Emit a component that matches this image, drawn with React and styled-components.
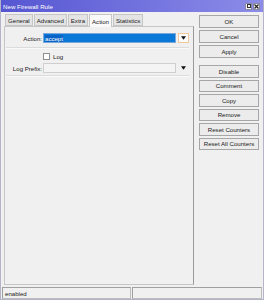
import React from "react";
import styled, { createGlobalStyle } from "styled-components";

const Global = createGlobalStyle`
  html, body { margin: 0; padding: 0; background: #f0f0f0; }
  body { font-family: "Liberation Sans", Arial, sans-serif; }
`;

const Window = styled.div`
  width: 264px;
  height: 300px;
  box-sizing: border-box;
  background: #f0f0f0;
  border: 1px solid #b4b4c8;
  border-top: none;
  display: flex;
  flex-direction: column;
  font-size: 6.1px;
  color: #1a1a1a;
  overflow: hidden;
`;

const TitleBar = styled.div`
  height: 12px;
  flex: none;
  background: linear-gradient(to right, #5656d2, #7676e0 60%, #8c8ce8);
  display: flex;
  align-items: center;
  padding: 0 3px 0 2px;
  color: #ffffff;
  font-size: 6.2px;
`;

const TitleText = styled.span`
  flex: 1;
`;

const WinButtons = styled.div`
  display: flex;
  gap: 1px;
`;

const WinButton = styled.div`
  width: 7px;
  height: 7px;
  box-sizing: border-box;
  background: #f4f4f4;
  border: 1px solid #8a8aa8;
  display: flex;
  align-items: center;
  justify-content: center;
`;

const Body = styled.div`
  flex: 1;
  display: flex;
  padding: 1px 4px 0 3px;
  gap: 5px;
`;

const LeftCol = styled.div`
  width: 190px;
  display: flex;
  flex-direction: column;
`;

const TabStrip = styled.div`
  height: 13px;
  display: flex;
  align-items: flex-end;
  gap: 1px;
  margin-left: 1px;
`;

const Tab = styled.div`
  height: ${(p) => (p.$active ? 13 : 12)}px;
  box-sizing: border-box;
  padding: 0 2px;
  display: flex;
  align-items: center;
  background: ${(p) => (p.$active ? "#f9f9f9" : "#e4e4e4")};
  border: 1px solid #c6c6c6;
  border-bottom: ${(p) => (p.$active ? "none" : "1px solid #c6c6c6")};
  margin-bottom: ${(p) => (p.$active ? "-1px" : "0")};
  position: relative;
  z-index: ${(p) => (p.$active ? 1 : 0)};
`;

const Panel = styled.div`
  flex: 1;
  box-sizing: border-box;
  border: 1px solid #c6c6c6;
  border-right: 1px solid #9a9a9a;
  background: #f0f0f0;
  padding: 6px 4px 0 0;
  display: flex;
  flex-direction: column;
`;

const Row = styled.div`
  display: flex;
  align-items: center;
  height: 10px;
`;

const Label = styled.div`
  width: 37px;
  text-align: right;
  padding-right: 1px;
  flex: none;
`;

const Field = styled.div`
  flex: 1;
  height: 10px;
  box-sizing: border-box;
  border: 1px solid ${(p) => (p.$selected ? "#7aa7d8" : "#cfcfcf")};
  background: ${(p) => (p.$selected ? "#0a78d7" : "#f4f4f4")};
  color: #ffffff;
  display: flex;
  align-items: center;
  padding-left: 1px;
`;

const Selected = styled.span`
  background: #0a64c8;
  color: #fff;
`;

const DropButton = styled.div`
  width: 11px;
  height: 10px;
  box-sizing: border-box;
  margin-left: 2px;
  flex: none;
  display: flex;
  align-items: center;
  justify-content: center;
  background: ${(p) => (p.$boxed ? "#fbfbfb" : "transparent")};
  border: 1px solid ${(p) => (p.$boxed ? "#f0c89a" : "transparent")};
`;

const Separator = styled.div`
  height: 0;
  border-top: 1px solid #dcdcdc;
  border-bottom: 1px solid #fafafa;
  margin: ${(p) => p.$m || "4px 0 4px 2px"};
`;

const CheckRow = styled.div`
  display: flex;
  align-items: center;
  height: 8px;
  padding-left: 38px;
  gap: 3px;
  margin-bottom: 3px;
`;

const CheckBox = styled.div`
  width: 7px;
  height: 7px;
  box-sizing: border-box;
  border: 1px solid #8e8e8e;
  background: #fff;
`;

const RightCol = styled.div`
  width: 60px;
  display: flex;
  flex-direction: column;
  padding-top: 2px;
`;

const Button = styled.div`
  height: 12.5px;
  box-sizing: border-box;
  border: 1px solid #a6a6a6;
  background: #ececec;
  display: flex;
  align-items: center;
  justify-content: center;
  margin-bottom: ${(p) => p.$gap ?? 2}px;
`;

const StatusBar = styled.div`
  height: 12px;
  flex: none;
  margin: 2px 1px 0 1px;
  display: flex;
  gap: 1px;
`;

const StatusCell = styled.div`
  flex: ${(p) => (p.$w ? `0 0 ${p.$w}px` : 1)};
  box-sizing: border-box;
  border: 1px solid #bdbdbd;
  border-top-color: #a0a0a0;
  border-left-color: #a0a0a0;
  display: flex;
  align-items: center;
  padding-left: 2px;
`;

const Arrow = ({ size = 5 }) => (
  <svg width={size} height={size - 1} viewBox="0 0 6 4">
    <path d="M0 0 L6 0 L3 4 Z" fill="#111" />
  </svg>
);

export default function App() {
  const buttons = [
    ["OK", 2.5],
    ["Cancel", 2.5],
    ["Apply", 7.5],
    ["Disable", 2],
    ["Comment", 2],
    ["Copy", 2],
    ["Remove", 2],
    ["Reset Counters", 2],
    ["Reset All Counters", 2],
  ];
  return (
    <>
      <Global />
      <Window>
        <TitleBar>
          <TitleText>New Firewall Rule</TitleText>
          <WinButtons>
            <WinButton>
              <svg width="4" height="4" viewBox="0 0 4 4">
                <rect x="0.5" y="0.5" width="3" height="3" fill="none" stroke="#333" strokeWidth="1" />
              </svg>
            </WinButton>
            <WinButton>
              <svg width="5" height="5" viewBox="0 0 5 5">
                <path d="M0.5 0.5 L4.5 4.5 M4.5 0.5 L0.5 4.5" stroke="#222" strokeWidth="1.2" />
              </svg>
            </WinButton>
          </WinButtons>
        </TitleBar>
        <Body>
          <LeftCol>
            <TabStrip>
              <Tab>General</Tab>
              <Tab>Advanced</Tab>
              <Tab>Extra</Tab>
              <Tab $active>Action</Tab>
              <Tab>Statistics</Tab>
            </TabStrip>
            <Panel>
              <Row>
                <Label>Action:</Label>
                <Field $selected>
                  <Selected>accept</Selected>
                </Field>
                <DropButton $boxed>
                  <Arrow />
                </DropButton>
              </Row>
              <Separator $m="4px 0 3px 1px" />
              <CheckRow>
                <CheckBox />
                <span>Log</span>
              </CheckRow>
              <Row>
                <Label>Log Prefix:</Label>
                <Field />
                <DropButton>
                  <Arrow />
                </DropButton>
              </Row>
              <Separator $m="2px 0 0 1px" />
            </Panel>
          </LeftCol>
          <RightCol>
            {buttons.map(([t, g]) => (
              <Button key={t} $gap={g}>
                {t}
              </Button>
            ))}
          </RightCol>
        </Body>
        <StatusBar>
          <StatusCell $w={129}>enabled</StatusCell>
          <StatusCell />
        </StatusBar>
      </Window>
    </>
  );
}
